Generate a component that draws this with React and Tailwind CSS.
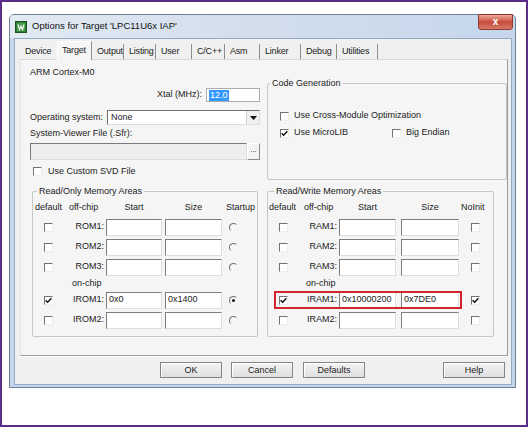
import React from 'react'

const TABS = [
  { label: 'Device', w: 'w-[37px]', last: true },
  { label: 'Target', w: 'w-[35px]', active: true },
  { label: 'Output', w: 'w-[32px]' },
  { label: 'Listing', w: 'w-[32px]' },
  { label: 'User', w: 'w-[36px]' },
  { label: 'C/C++', w: 'w-[33px]' },
  { label: 'Asm', w: 'w-[35px]' },
  { label: 'Linker', w: 'w-[41px]' },
  { label: 'Debug', w: 'w-[36px]' },
  { label: 'Utilities', w: 'w-[41px]' },
]

const ROM_ROWS = [
  { label: 'ROM1:' },
  { label: 'ROM2:' },
  { label: 'ROM3:' },
  { chip: true },
  { label: 'IROM1:', on: true, start: '0x0', size: '0x1400', startup: true },
  { label: 'IROM2:' },
]

const RAM_ROWS = [
  { label: 'RAM1:' },
  { label: 'RAM2:' },
  { label: 'RAM3:' },
  { chip: true },
  { label: 'IRAM1:', on: true, start: '0x10000200', size: '0x7DE0', noinit: true, mark: true },
  { label: 'IRAM2:' },
]

function Logo() {
  return (
    <svg width="12" height="12" viewBox="0 0 12 12" className="shrink-0">
      <rect x="0.5" y="0.5" width="11" height="11" fill="#2f7d34" stroke="#1c5520" />
      <rect x="2" y="2" width="8" height="8" fill="#4f9c53" />
      <path d="M3 3.5 L4.5 8.5 L6 5.2 L7.5 8.5 L9 3.5" fill="none" stroke="#f2f7f0" strokeWidth="1.2" />
    </svg>
  )
}

function Check({ on }) {
  return (
    <span className="inline-flex w-[9px] h-[9px] shrink-0 items-center justify-center bg-white border border-t-[#727272] border-l-[#727272] border-r-[#ededed] border-b-[#ededed]">
      {on && (
        <svg width="7" height="7" viewBox="0 0 7 7">
          <path d="M0.6 3.3 L2.6 5.3 L6.4 1.2" fill="none" stroke="#111" strokeWidth="1.4" />
        </svg>
      )}
    </span>
  )
}

function Radio({ on }) {
  return (
    <span className="inline-flex w-[9px] h-[9px] shrink-0 items-center justify-center rounded-full bg-[#f7f7f7] border border-t-[#707070] border-l-[#707070] border-r-[#f2f2f2] border-b-[#f2f2f2]">
      {on && <span className="w-[3px] h-[3px] rounded-full bg-[#111]" />}
    </span>
  )
}

function Field({ className, children }) {
  return (
    <div className={`h-[17px] shrink-0 bg-white border border-t-[#7c7c7c] border-l-[#7c7c7c] border-r-[#dedede] border-b-[#dedede] pl-[2px] leading-[13px] ${className}`}>
      {children}
    </div>
  )
}

function Button({ children, className = '' }) {
  return (
    <div className={`w-[62px] h-[16px] shrink-0 border border-[#858585] bg-gradient-to-b from-[#f4f4f4] to-[#dedede] shadow-[inset_1px_1px_0_#fff] text-center leading-[14px] ${className}`}>
      {children}
    </div>
  )
}

function RomArea() {
  return (
    <fieldset className="mt-[10px] ml-[2px] w-[226px] h-[151px] shrink-0 border border-[#c6c6c6] rounded-[2px]">
      <legend className="ml-[4px] px-[2px] leading-[11px]">Read/Only Memory Areas</legend>
      <div className="mt-[4px] h-[12px] leading-[12px] flex">
        <span className="w-[31px] pl-[2px]">default</span>
        <span className="w-[42px] pl-[5px]">off-chip</span>
        <span className="w-[56px] text-center">Start</span>
        <span className="w-[57px] ml-[3px] text-center">Size</span>
        <span className="w-[35px] pl-[4px]">Startup</span>
      </div>
      <div className="mt-[4px] flex flex-col">
        {ROM_ROWS.map((r, i) =>
          r.chip ? (
            <div key={i} className="h-[13px] leading-[12px] pl-[39px]">on-chip</div>
          ) : (
            <div key={i} className="h-[20px] flex items-center">
              <span className="w-[31px] pl-[11px] flex"><Check on={r.on} /></span>
              <span className="w-[42px] pr-[2px] text-right">{r.label}</span>
              <Field className="w-[56px]">{r.start}</Field>
              <Field className="w-[57px] ml-[3px]">{r.size}</Field>
              <span className="w-[35px] pl-[7px] flex"><Radio on={r.startup} /></span>
            </div>
          )
        )}
      </div>
    </fieldset>
  )
}

function RamArea() {
  return (
    <fieldset className="mt-[6px] w-[227px] h-[151px] shrink-0 border border-[#c6c6c6] rounded-[2px]">
      <legend className="ml-[6px] px-[2px] leading-[11px]">Read/Write Memory Areas</legend>
      <div className="mt-[4px] h-[12px] leading-[12px] flex">
        <span className="w-[31px] pl-[1px]">default</span>
        <span className="w-[40px] pl-[5px]">off-chip</span>
        <span className="w-[57px] text-center">Start</span>
        <span className="w-[58px] ml-[5px] text-center">Size</span>
        <span className="w-[34px] pl-[2px]">NoInit</span>
      </div>
      <div className="mt-[4px] flex flex-col">
        {RAM_ROWS.map((r, i) =>
          r.chip ? (
            <div key={i} className="h-[13px] leading-[12px] pl-[38px]">on-chip</div>
          ) : (
            <div key={i} className="relative h-[20px] flex items-center">
              <span className="w-[31px] pl-[11px] flex"><Check on={r.on} /></span>
              <span className="w-[40px] pr-[2px] text-right">{r.label}</span>
              <Field className="w-[57px]">{r.start}</Field>
              <Field className="w-[58px] ml-[5px]">{r.size}</Field>
              <span className="w-[34px] pl-[12px] flex"><Check on={r.noinit} /></span>
              {r.mark && (
                <span className="absolute left-[6px] top-[1px] w-[188px] h-[18px] border-2 border-[#d3232f]" />
              )}
            </div>
          )
        )}
      </div>
    </fieldset>
  )
}

export default function App() {
  return (
    <div className="w-[528px] h-[427px] border-2 border-[#5b2d86] bg-white pl-[7px] pt-[12px] font-['Liberation_Sans',Arial,sans-serif] text-[9px] text-[#1b1b1b]">
      <div className="w-[507px] h-[374px] flex flex-col border border-[#6f7f96] rounded-t-[5px] bg-[#c4d6ec]">
        {/* title bar */}
        <div className="h-[23px] shrink-0 flex items-center pl-[5px] pr-[2px] rounded-t-[4px] bg-gradient-to-r from-[#e2eaf3] via-[#d2deec] to-[#c6d7ec]">
          <Logo />
          <span className="ml-[5px] text-[9.5px] text-[#111]">Options for Target 'LPC11U6x IAP'</span>
          <div className="ml-auto self-start -mt-px w-[35px] h-[16px] rounded-b-[3px] border border-[#8e3a31] bg-gradient-to-b from-[#eaa99b] via-[#c84a3c] to-[#d6796a] text-white font-bold text-[10px] leading-[13px] text-center">
            x
          </div>
        </div>

        {/* body */}
        <div className="ml-[4px] mr-[3px] h-[347px] shrink-0 border border-[#93aac6] bg-[#f0f0f0] flex flex-col">
          <div className="mt-[2px] ml-[5px] h-[18px] flex items-end tracking-[-0.2px]">
            {TABS.map(t =>
              t.active ? (
                <div key={t.label} className={`relative z-10 -mb-px h-[19px] ${t.w} pl-[4px] pt-[2px] leading-[12px] bg-[#f5f5f5] border-t border-l border-r border-t-white border-l-white border-r-[#8e8e8e]`}>
                  {t.label}
                </div>
              ) : (
                <div key={t.label} className={`h-[15px] ${t.w} pl-[5px] leading-[15px] whitespace-nowrap ${t.last ? '' : 'border-r border-[#8e8e8e]'}`}>
                  {t.label}
                </div>
              )
            )}
          </div>

          {/* tab page */}
          <div className="ml-[5px] w-[488px] h-[297px] shrink-0 flex pl-[9px] bg-[#f5f5f5] border border-t-[#d6d6d6] border-l-[#e4e4e4] border-r-[#9b9b9b] border-b-[#9b9b9b] shadow-[0_1px_0_#fff]">
            <div className="w-[230px] shrink-0 flex flex-col">
              <div className="mt-[6px] h-[12px] leading-[12px]">ARM Cortex-M0</div>
              <div className="mt-[10px] h-[14px] flex items-center">
                <span className="w-[176px] pr-[4px] text-right">Xtal (MHz):</span>
                <div className="w-[54px] h-[14px] bg-white border border-[#abadb3] pl-[2px] flex items-center">
                  <span className="bg-[#3399ff] text-white px-[1px] leading-[11px]">12.0</span>
                </div>
              </div>
              <div className="mt-[8px] h-[15px] flex items-center">
                <span className="w-[77px]">Operating system:</span>
                <div className="w-[153px] h-[15px] flex bg-white border border-t-[#6f6f6f] border-l-[#6f6f6f] border-r-[#dcdcdc] border-b-[#dcdcdc]">
                  <span className="flex-1 pl-[3px] leading-[13px]">None</span>
                  <span className="w-[13px] flex items-center justify-center bg-[#f0f0f0] border-l border-[#d0d0d0]">
                    <svg width="7" height="4" viewBox="0 0 7 4"><path d="M0 0 H7 L3.5 4 Z" fill="#111" /></svg>
                  </span>
                </div>
              </div>
              <div className="mt-[2px] h-[12px] leading-[12px]">System-Viewer File (.Sfr):</div>
              <div className="mt-[4px] h-[17px] flex">
                <div className="w-[217px] h-[17px] bg-[#eeeeee] border border-t-[#7a7a7a] border-l-[#7a7a7a] border-r-[#dddddd] border-b-[#dddddd]" />
                <div className="w-[13px] h-[17px] bg-[#f3f3f3] border border-t-white border-l-white border-r-[#8a8a8a] border-b-[#8a8a8a] text-[8px] leading-[12px] text-center">...</div>
              </div>
              <div className="mt-[6px] h-[10px] flex items-center">
                <span className="ml-[3px] flex"><Check /></span>
                <span className="ml-[6px] leading-[10px]">Use Custom SVD File</span>
              </div>
              <RomArea />
            </div>

            <div className="ml-[7px] flex flex-col">
              <fieldset className="mt-[18px] w-[240px] h-[102px] shrink-0 border border-[#c6c6c6] rounded-[2px]">
                <legend className="ml-[2px] px-[2px] leading-[11px]">Code Generation</legend>
                <div className="mt-[22px] h-[10px] flex items-center pl-[12px]">
                  <Check />
                  <span className="pl-[5px]">Use Cross-Module Optimization</span>
                </div>
                <div className="mt-[7px] h-[10px] flex items-center pl-[12px]">
                  <Check on />
                  <span className="w-[103px] pl-[5px]">Use MicroLIB</span>
                  <Check />
                  <span className="pl-[5px]">Big Endian</span>
                </div>
              </fieldset>
              <RamArea />
            </div>
          </div>

          {/* buttons */}
          <div className="mt-[6px] ml-[145px] flex">
            <Button>OK</Button>
            <Button className="ml-[9px]">Cancel</Button>
            <Button className="ml-[10px]">Defaults</Button>
            <Button className="ml-[78px]">Help</Button>
          </div>
        </div>
      </div>
    </div>
  )
}
